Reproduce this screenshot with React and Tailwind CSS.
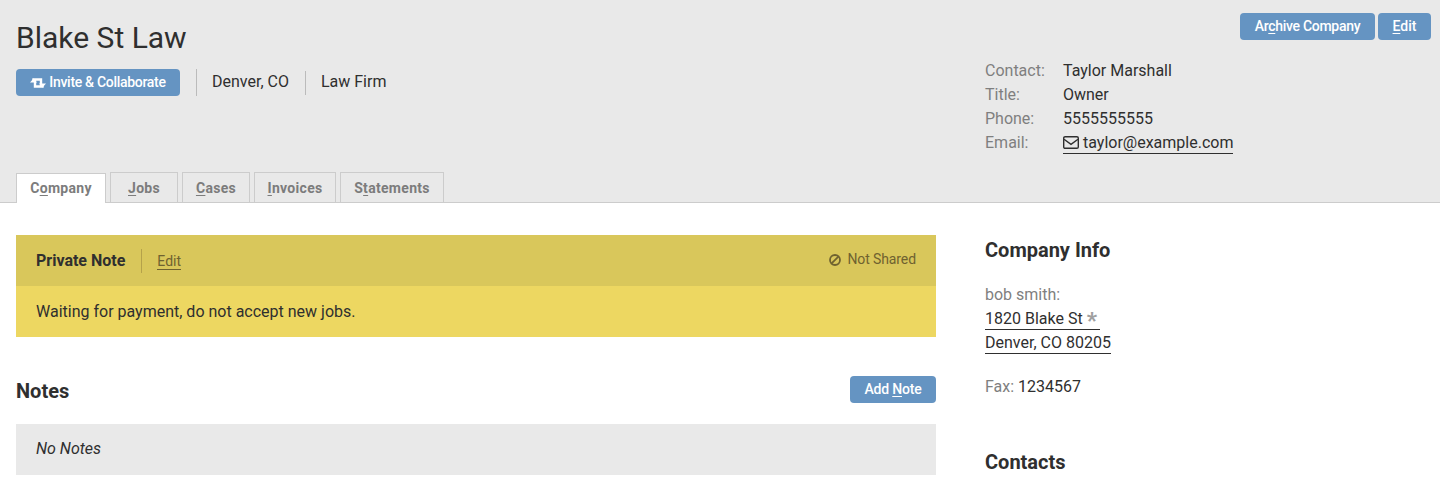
import React from "react";

const Btn = ({ children, className = "" }) => (
  <button className={`h-[27px] rounded-[4px] bg-[#6594c2] text-[14px] font-medium text-white ${className}`}>
    {children}
  </button>
);

const Key = ({ children }) => <span className="underline underline-offset-2 decoration-1">{children}</span>;

const Tab = ({ children, active }) => (
  <div
    className={`flex h-[30px] items-center justify-center border border-b-0 border-[#ccc] text-[14px] font-bold tracking-[0.3px] text-[#7c7c7c] ${
      active ? "relative top-px bg-white" : "pt-[2px]"
    }`}
  >
    {children}
  </div>
);

const ContactRow = ({ label, children }) => (
  <div className="flex h-6 items-center">
    <span className="w-[78px] text-[#7f7f7f]">{label}</span>
    <span>{children}</span>
  </div>
);

// exchange-style arrows on a ticket
const InviteIcon = () => (
  <svg width="16" height="12" viewBox="0 0 16 12" fill="none">
    <path d="M3.5 5V2.5H11V9.5" stroke="white" strokeWidth="2.4" />
    <path d="M12.5 7V9.5H5V2.5" stroke="white" strokeWidth="2.4" />
    <path d="M0 5.5H7L3.5 1.5Z M16 6.5H9L12.5 10.5Z" fill="white" />
  </svg>
);

const MailIcon = () => (
  <svg className="-translate-y-px" width="16" height="13" viewBox="0 0 16 13" fill="none" stroke="#2f2f2f" strokeWidth="1.4">
    <rect x="0.7" y="0.7" width="14.6" height="11.6" rx="1.4" />
    <path d="M1 3.2L8 8.4L15 3.2" />
  </svg>
);

const BanIcon = () => (
  <svg width="12" height="12" viewBox="0 0 12 12" fill="none" stroke="#6f6230" strokeWidth="1.8">
    <circle cx="6" cy="6" r="5" />
    <path d="M2.6 9.4L9.4 2.6" />
  </svg>
);

const App = () => {
  return (
    <div className="h-[488px] overflow-hidden bg-white font-['Roboto',sans-serif] text-[16px] text-[#2f2f2f]">
      <header className="flex h-[203px] justify-between border-b border-[#ccc] bg-[#e9e9e9] pl-4 pr-[9px]">
        <div className="flex flex-col">
          <h1 className="mt-[19px] text-[30px] leading-[38px]">Blake St Law</h1>
          <div className="mt-3 flex items-center">
            <Btn className="flex w-[164px] items-center justify-center gap-[3px] tracking-[-0.3px]">
              <InviteIcon />
              Invite &amp; Collaborate
            </Btn>
            <div className="ml-4 h-[27px] w-px bg-[#bbb]" />
            <span className="pb-[2px] pl-[15px] pr-4">Denver, CO</span>
            <div className="h-6 w-px bg-[#bbb]" />
            <span className="pb-[2px] pl-[15px]">Law Firm</span>
          </div>
          <nav className="mt-auto flex gap-1">
            <Tab active><span className="w-[88px] text-center">C<Key>o</Key>mpany</span></Tab>
            <Tab><span className="w-[66px] text-center"><Key>J</Key>obs</span></Tab>
            <Tab><span className="w-[66px] text-center"><Key>C</Key>ases</span></Tab>
            <Tab><span className="w-[80px] text-center"><Key>I</Key>nvoices</span></Tab>
            <Tab><span className="w-[102px] text-center">S<Key>t</Key>atements</span></Tab>
          </nav>
        </div>
        <div className="flex w-[446px] flex-col">
          <div className="mt-[13px] flex justify-end gap-[3px]">
            <Btn className="w-[135px] tracking-[-0.3px]">Ar<Key>c</Key>hive Company</Btn>
            <Btn className="w-[53px]"><Key>E</Key>dit</Btn>
          </div>
          <div className="mt-[19px]">
            <ContactRow label="Contact:">Taylor Marshall</ContactRow>
            <ContactRow label="Title:">Owner</ContactRow>
            <ContactRow label="Phone:">5555555555</ContactRow>
            <ContactRow label="Email:">
              <span className="inline-flex items-center gap-1 border-b border-[#2f2f2f] pt-[4px] leading-[20px]">
                <MailIcon />
                taylor@example.com
              </span>
            </ContactRow>
          </div>
        </div>
      </header>

      <main className="flex pl-4 pt-8">
        <div className="w-[920px]">
          <section>
            <div className="flex h-[51px] items-center bg-[#d9c75b] px-5">
              <span className="font-bold">Private Note</span>
              <div className="ml-4 mr-[15px] h-6 w-px bg-[#b5a24a]" />
              <span className="mt-[2px] border-b border-[#6f6230] text-[14px] leading-[16px] text-[#6f6230]">Edit</span>
              <span className="ml-auto flex items-center gap-[6px] pb-[2px] text-[14px] tracking-[-0.1px] text-[#6f6230]">
                <BanIcon />
                Not Shared
              </span>
            </div>
            <div className="flex h-[51px] items-center bg-[#edd761] px-5">Waiting for payment, do not accept new jobs.</div>
          </section>
          <div className="mt-[39px] flex h-[27px] items-center justify-between">
            <h2 className="mt-[3px] text-[20px] font-bold">Notes</h2>
            <Btn className="w-[86px] tracking-[-0.2px]">Add <Key>N</Key>ote</Btn>
          </div>
          <div className="mt-[21px] flex h-[51px] items-center bg-[#e9e9e9] px-5 pb-[2px] italic">No Notes</div>
        </div>
        <aside className="ml-[49px]">
          <h2 className="mt-px text-[20px] font-bold leading-7">Company Info</h2>
          <div className="mt-[19px] leading-6 text-[#7f7f7f]">bob smith:</div>
          <div>
            <div className="mb-px flex h-[23px] w-[115px] border-b border-[#2f2f2f] leading-[23px]">
              1820 Blake St
              <span className="ml-1 text-[22px] font-black leading-[28px] text-[#a0a0a0]">*</span>
            </div>
            <div className="mb-px h-[23px] w-fit border-b border-[#2f2f2f] leading-[23px]">Denver, CO 80205</div>
          </div>
          <div className="mt-[21px] leading-6"><span className="text-[#7f7f7f]">Fax:</span> 1234567</div>
          <h2 className="mt-[49px] text-[20px] font-bold leading-7">Contacts</h2>
        </aside>
      </main>
    </div>
  );
};

export default App;
